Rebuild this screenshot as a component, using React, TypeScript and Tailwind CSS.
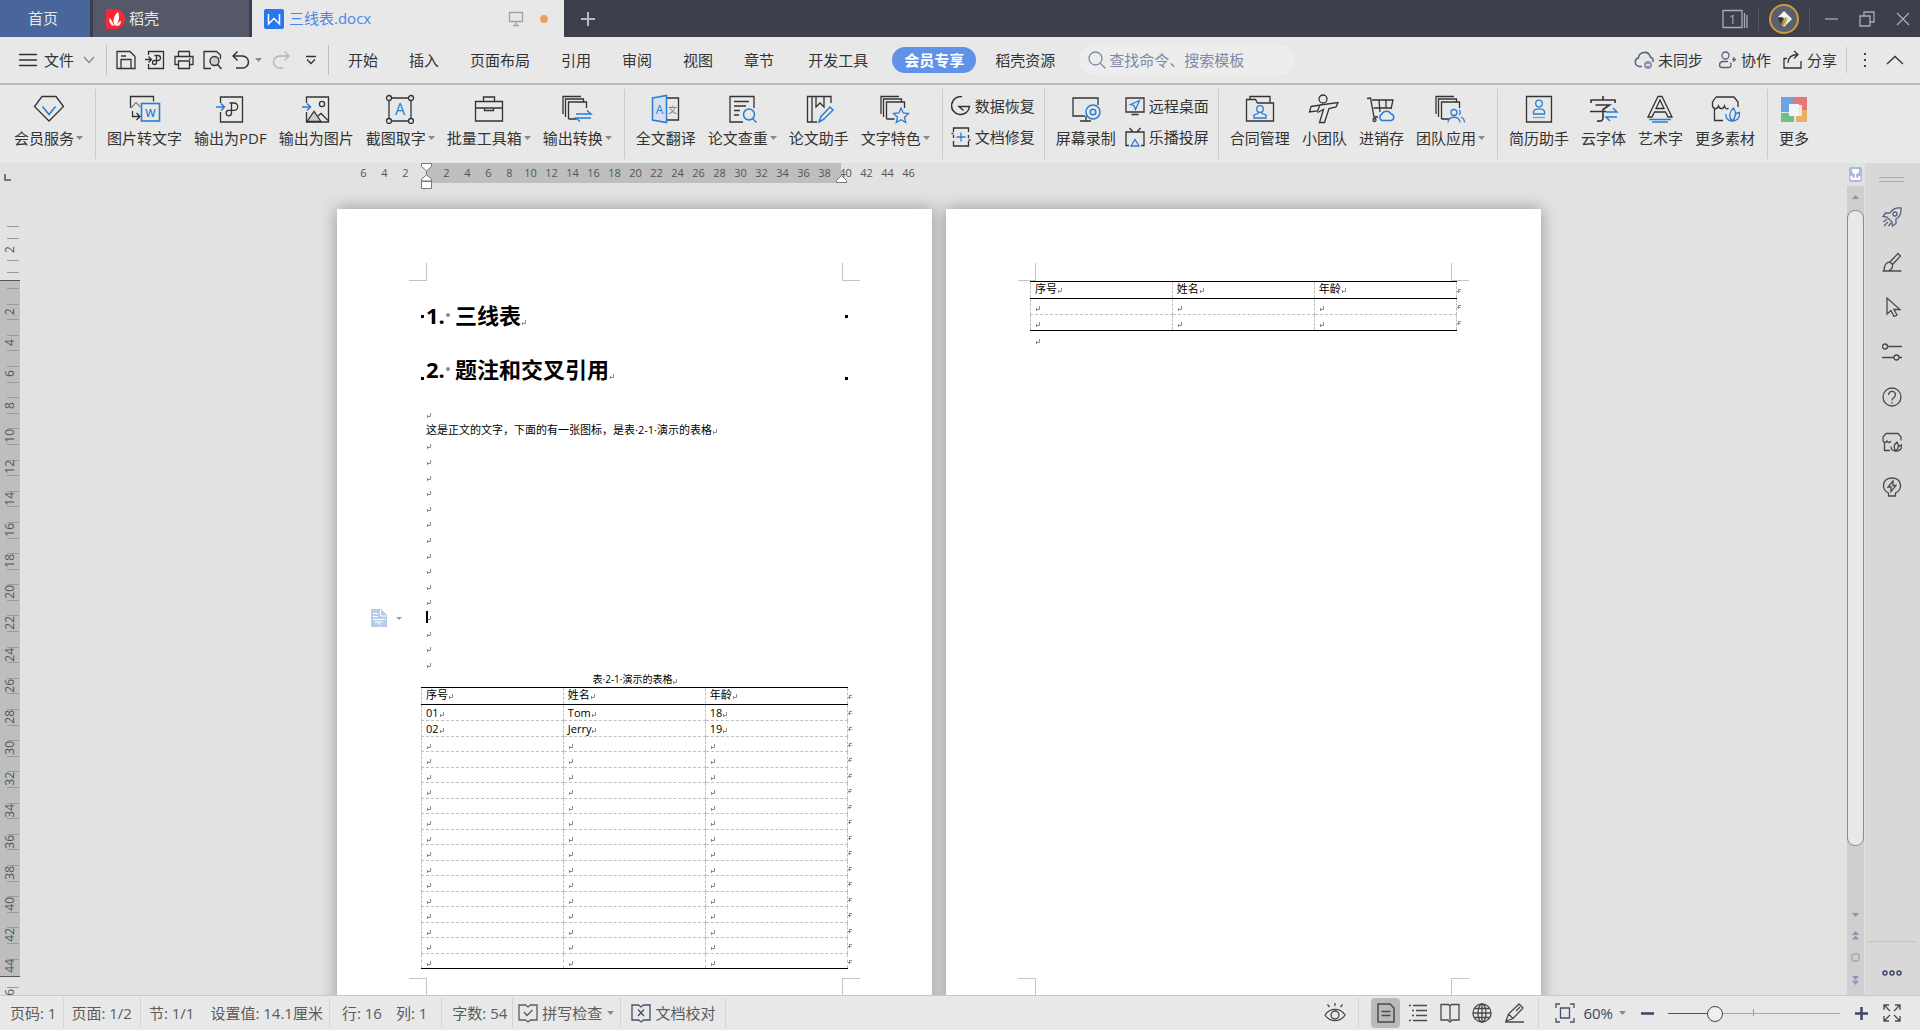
import React, { useState } from "react";

const BLUE = "#2b7cd3";

type SvgProps = { w?: number; h?: number; className?: string; children: React.ReactNode };

const Svg: React.FC<SvgProps> = ({ w = 20, h = 20, className = "", children }) => (
  <svg
    width={w}
    height={h}
    viewBox={`0 0 ${w} ${h}`}
    fill="none"
    stroke="currentColor"
    strokeWidth="1.3"
    className={`shrink-0 ${className}`}
    aria-hidden="true"
  >
    {children}
  </svg>
);

const Caret = ({ className = "" }: { className?: string }) => (
  <svg width="7" height="4" viewBox="0 0 7 4" className={`shrink-0 ${className}`} aria-hidden="true">
    <path d="M0 0h7L3.5 4z" fill="#8a8a8a" />
  </svg>
);

// paragraph end mark
const Mark = ({ className = "mt-1" }: { className?: string }) => (
  <svg width="5" height="5" viewBox="0 0 5 5" className={`shrink-0 ${className}`} aria-hidden="true">
    <path d="M4.5 0v3.5H1.5M1.5 2v3" fill="none" stroke="#8c8c8c" />
  </svg>
);

// table row end mark
const RowMark = () => (
  <svg width="4" height="5" viewBox="0 0 4 5" className="block" aria-hidden="true">
    <path d="M0 3.5h1M1.5 1v4M1.5 1.5h2.5M1.5 3.5h2" fill="none" stroke="#8c8c8c" />
  </svg>
);

const stack = <path d="M2 20V2.5h18M4.5 23V5h18v3M7.5 25V8h18v6M7.5 25h8" />;

const bigIcons: Record<string, React.ReactNode> = {
  vip: (
    <>
      <path d="M9 2.5h14l7.5 10L16 27 1.5 12.5z" />
      <path d="M9.5 12.5l6.5 8 6.5-8" stroke={BLUE} strokeWidth="1.6" />
    </>
  ),
  toText: (
    <>
      <path d="M1.5 14V2.5h23v5" />
      <path d="M2 14l5-5.5 4.5 4.5" stroke="#888" />
      <path d="M3.5 17v5.5h7M7.5 19l3.5 3.5L7.5 26" />
      <rect x="12.5" y="9.5" width="18" height="17.5" stroke={BLUE} strokeWidth="1.6" />
      <text x="21.5" y="22.5" fontSize="11" textAnchor="middle" fill={BLUE} stroke="none" fontWeight="600">W</text>
    </>
  ),
  toPdf: (
    <>
      <path d="M6.5 9V3h22v25h-22V18" />
      <path d="M2 13h8M7 9.5l3.5 3.5L7 16.5" stroke={BLUE} strokeWidth="1.5" />
      <path d="M15.5 9h4.5a3.7 3.7 0 0 1 0 7.4h-5.5a2.7 2.7 0 1 0 3 3V9" />
    </>
  ),
  toPic: (
    <>
      <path d="M6.5 9V3h22v25h-22V18" />
      <path d="M7 27.5l7-10 7 10z" fill="#ccc" />
      <path d="M18 22l3-2.5 7 7" />
      <circle cx="22" cy="10" r="2.6" />
      <path d="M2 13h8M7 9.5l3.5 3.5L7 16.5" stroke={BLUE} strokeWidth="1.5" />
    </>
  ),
  ocr: (
    <>
      <path d="M8 4h16M8 27h16M5 7v17M27 7v17" />
      <circle cx="5" cy="4" r="2.5" />
      <circle cx="27" cy="4" r="2.5" />
      <circle cx="5" cy="27" r="2.5" />
      <circle cx="27" cy="27" r="2.5" />
      <text x="16" y="21" fontSize="16" textAnchor="middle" fill={BLUE} stroke="none">A</text>
    </>
  ),
  toolbox: (
    <>
      <path d="M2.5 7.5h27V27h-27zM2.5 14h27" />
      <path d="M10.5 7V3h11v4" />
      <path d="M11.5 14v2.5h9V14" />
    </>
  ),
  convert: (
    <>
      {stack}
      <path d="M15 20h15l-4-3.5M30 24H15l4 3.5" stroke={BLUE} strokeWidth="1.5" />
    </>
  ),
  translate: (
    <>
      <path d="M17 4h11.5v22H17" />
      <path d="M2.5 4L16.5 1.5v27L2.5 26z" stroke={BLUE} fill="#d6dfee" strokeWidth="1.5" />
      <text x="9.5" y="20" fontSize="12" textAnchor="middle" fill={BLUE} stroke="none">A</text>
      <text x="22.5" y="19" fontSize="9" textAnchor="middle" fill="#777" stroke="none">文</text>
    </>
  ),
  check: (
    <>
      <path d="M28 14V2.5H4v25.5h13M8 7.5h15M8 12h12M8 16.5h6M8 21h5" />
      <circle cx="23" cy="20.5" r="5.5" stroke={BLUE} strokeWidth="1.5" />
      <path d="M26.5 24.5l4 4" stroke={BLUE} strokeWidth="1.5" />
    </>
  ),
  helper: (
    <>
      <path d="M28 9V2.5H4.5v25.5H14M9 3v25M13 3v10l4-4 4 4V3" />
      <path d="M16 28l2-5.5L27 13l3 3-9.5 9.5z" stroke={BLUE} strokeWidth="1.5" />
    </>
  ),
  feature: (
    <>
      {stack}
      <path d="M22 14l2.2 5 5.3.5-4 3.7 1.2 5.3-4.7-2.7-4.7 2.7 1.2-5.3-4-3.7 5.3-.5z" fill="#e8e8e8" stroke={BLUE} />
    </>
  ),
  record: (
    <>
      <path d="M28 11V4H3v18h12M10 27h11M16 22v5" />
      <circle cx="23" cy="18" r="7" stroke={BLUE} fill="#e8e8e8" strokeWidth="1.5" />
      <circle cx="23" cy="18" r="2.8" stroke={BLUE} strokeWidth="1.5" />
    </>
  ),
  contract: (
    <>
      <path d="M2.5 27V5.5h9l2 3.5h16v18z" />
      <path d="M6 5V2.5h20v6" />
      <circle cx="16" cy="15" r="3.3" stroke={BLUE} />
      <path d="M14.5 18l-.5 1.500-4 1.500v3h12v-3l-4-1.500-.5-1.500" stroke={BLUE} />
    </>
  ),
  team: (
    <>
      <circle cx="15" cy="5" r="4" />
      <path d="M3 12.5l9-1.5-2.5 6-8 1zM12 11l18-2.500-2 4.500-7 1.500-4.500 14h-5l4-13-6 3" />
    </>
  ),
  stock: (
    <>
      <path d="M2 4.5l3.500-.5L9 23h4M7 6h21l-2 9M8.500 14h18M14 6l1 12M21 6v8" />
      <circle cx="9.5" cy="26" r="1.5" />
      <path d="M17 26.5a3.500 3.500 0 0 1 0-6.5 5 5 0 0 1 9 0 3.300 3.300 0 0 1 0 6.500z" stroke={BLUE} fill="#e8e8e8" strokeWidth="1.5" />
    </>
  ),
  apps: (
    <>
      {stack}
      <circle cx="20" cy="18.5" r="3" stroke={BLUE} fill="#e8e8e8" />
      <path d="M14 28.5c0-7 12-7 12 0M25 16a3 3 0 0 1 0 5M27 23c2 1 3.500 3 3.500 5.500" stroke={BLUE} />
    </>
  ),
  resume: (
    <>
      <path d="M3.5 2.5h25V28h-25z" />
      <circle cx="16" cy="9.5" r="3.3" stroke={BLUE} />
      <path d="M10.5 20v-2.500c1-3.500 10-3.500 11 0V20z" stroke={BLUE} />
      <path d="M10 23.5h12" stroke="#999" />
    </>
  ),
  cloudFont: (
    <>
      <path d="M4 9V6h24v3M16 2v4M8.500 11h14L16 15.500V24c0 3-2 3.500-6 3M3 17.500h16" strokeWidth="1.6" />
      <path d="M19 18h11l-4-4M30 23H19l4 4" stroke={BLUE} strokeWidth="1.5" />
    </>
  ),
  art: (
    <>
      <path d="M4 23L14 2.500h4L28 23h-4l-2.500-5h-11L8 23zM12 14.500h8L16 6z" />
      <path d="M5 25.5h22M8 28h16" stroke={BLUE} strokeWidth="1.5" />
    </>
  ),
  store: (
    <>
      <path d="M7 3h18l4 5v5M7 3L3.500 8v4c1 3.500 5 3.500 6 0 1 3.500 5 3.500 6 0 1 3.500 3 3.500 4 2M5.500 14v12.500H14" />
      <path d="M23 27c-4-5-2-10 1.500-13 2.500 4 3 9-1.500 13zM23 27c-5 0-6.500-4-6-7M23 27c6 0 8-4 7.500-8.500-2 0-4 1.500-5 3" stroke={BLUE} />
    </>
  ),
  more: (
    <g stroke="none">
      <path d="M3 3h12v7h-4v8H3z" fill="#6ca3e8" />
      <path d="M15 3h14v13h-5v-5h-9z" fill="#e87878" />
      <path d="M3 19h8v3h5v6H3z" fill="#6cc283" />
      <path d="M29 16v12H18v-6h6v-6z" fill="#e8b063" />
      <path d="M11 10h10v12H11z" fill="#f4f4f4" />
    </g>
  ),
};

type BigProps = { icon: string; label: string; menu?: boolean };

const Big: React.FC<BigProps> = ({ icon, label, menu }) => (
  <button className="flex flex-col items-center gap-1 px-[6px] pt-[9px]">
    <Svg w={32} h={30} className="-mx-px">{bigIcons[icon]}</Svg>
    <span className="flex items-center whitespace-nowrap leading-5">
      {label}
      {menu && <Caret className="ml-[2px]" />}
    </span>
  </button>
);

type SmallProps = { label: string; children: React.ReactNode };

const Small: React.FC<SmallProps> = ({ label, children }) => (
  <button className="flex items-center gap-1 whitespace-nowrap leading-5">
    <Svg>{children}</Svg>
    {label}
  </button>
);

const Sep = () => <span className="my-1 ml-[6px] mr-[5px] w-px shrink-0 bg-[#cbcbcb]" />;

const TitleBar = () => (
  <header className="flex h-[37px] shrink-0 bg-[#3d404c] text-[#e8e8e8]">
    <button className="w-[90px] bg-[#48669b] pr-1">首页</button>
    <button className="ml-[3px] flex w-[156px] items-center gap-1 bg-[#545869] pl-[13px]">
      <svg width="19" height="20" viewBox="0 0 19 20" aria-hidden="true">
        <path d="M1 0h9a9 10 0 0 1 0 20H1a1 1 0 0 1-1-1V1a1 1 0 0 1 1-1z" fill="#fb2636" />
        <path d="M9 17C6 12 8 6 12 3c2 5 1 10-3 14zM8 17c-4-1-5-4-4.500-8C6 11 7 14 8 17zM10 17c1-3 3-4 5-5 0 3-2 5-5 5z" fill="#fff" />
      </svg>
      稻壳
    </button>
    <div className="ml-[3px] flex w-[312px] items-center bg-[#e8e8e8] pl-3 pr-4 text-[#4a86e8]">
      <svg width="20" height="20" viewBox="0 0 20 20" aria-hidden="true">
        <rect width="20" height="20" rx="2" fill="#2878ec" />
        <path d="M4.500 5v10l5.500-5.500 5.500 5.500V5" fill="none" stroke="#fff" strokeWidth="1.5" />
      </svg>
      <span className="ml-[5px] flex-1">三线表.docx</span>
      <Svg w={16} h={16} className="mr-4 text-[#a0a0a0]">
        <path d="M1.500 1.500h13v9h-13zM8 10.500v4M5 14.500h6" />
      </Svg>
      <span className="size-2 rounded-full bg-[#e8a05c]" />
    </div>
    <button className="ml-4 text-[#b8b9be]" aria-label="新建">
      <Svg w={16} h={16}><path d="M8 1v14M1 8h14" strokeWidth="2" /></Svg>
    </button>
    <div className="ml-auto flex items-center pr-[10px] text-[#a9abb3]">
      <Svg w={26} h={20}>
        <path d="M1 1.500h19v17H1zM22.500 4v15M25 6v13" />
        <text x="10.5" y="15" fontSize="13" textAnchor="middle" fill="currentColor" stroke="none">1</text>
      </Svg>
      <span className="mx-[10px] h-6 w-px bg-[#53555f]" />
      <svg width="30" height="30" viewBox="0 0 30 30" aria-hidden="true">
        <circle cx="15" cy="15" r="14" fill="#59606f" stroke="#d09a36" strokeWidth="2" />
        <path d="M15 7l8 8-8 8-2-2 1-8H9z" fill="#f2f2f2" />
        <path d="M9 14h6l-3 6z" fill="#2d333e" />
        <path d="M15 14l-2.500 7" stroke="#d94a3c" strokeWidth="1.5" />
        <path d="M17 13.500l-3 8" stroke="#69b54b" strokeWidth="1.5" />
        <path d="M18.500 14l-3 7" stroke="#e0a83a" strokeWidth="1.2" />
      </svg>
      <span className="ml-[10px] mr-[15px] h-6 w-px bg-[#53555f]" />
      <button aria-label="最小化"><Svg w={13} h={16}><path d="M0 8h13" /></Svg></button>
      <button className="ml-[21px]" aria-label="还原">
        <Svg w={16} h={16}><path d="M1 5h10v10H1zM5 5V1h10v10h-4" /></Svg>
      </button>
      <button className="ml-[21px]" aria-label="关闭">
        <Svg w={14} h={14}><path d="M1 1l12 12M13 1L1 13" /></Svg>
      </button>
    </div>
  </header>
);

const tabs = ["开始", "插入", "页面布局", "引用", "审阅", "视图", "章节", "开发工具"];

const MenuBar = () => (
  <nav className="flex h-12 shrink-0 items-center border-b-2 border-[#c2c2c2] pl-[19px] pr-4">
    <button className="flex items-center gap-[7px]">
      <Svg w={18} h={14}><path d="M0 1.500h18M0 7h18M0 12.500h18" /></Svg>
      文件
      <Svg w={12} h={8} className="ml-[2px] text-[#888]"><path d="M1 1l5 5.500L11 1" /></Svg>
    </button>
    <span className="ml-[11px] h-[30px] w-px bg-[#c0c0c0]" />
    <div className="ml-[9px] flex items-center">
      <button aria-label="保存">
        <Svg><path d="M1 1.500h13l5 5v12H1zM5 18V9.500h10V18M5 6h5" /></Svg>
      </button>
      <button className="ml-[9px]" aria-label="输出为PDF">
        <Svg>
          <path d="M3.500 5V1.500h15v17h-15V14M0 9.500h6M3.500 6.500l3 3-3 3" />
          <path d="M9.500 5.500H13a2.500 2.500 0 0 1 0 5H9.500a2 2 0 1 0 2 2v-7" />
        </Svg>
      </button>
      <button className="ml-[9px]" aria-label="打印">
        <Svg><path d="M4.500 6V1.500h11V6M4.500 14.500H1V6.500h18v8h-3.500M4.500 11h11v7.500h-11zM15 9h1.500" /></Svg>
      </button>
      <button className="ml-[9px]" aria-label="打印预览">
        <Svg>
          <path d="M8 18.500H1v-17h12.500l4 3.500v4" />
          <circle cx="11.5" cy="11" r="4.5" fill="#ccc" />
          <path d="M14.500 14.500l4 4.500" strokeWidth="1.6" />
        </Svg>
      </button>
      <button className="ml-[9px] flex items-center gap-[5px]" aria-label="撤销">
        <Svg w={18} h={20}><path d="M5.500 1.500L1 6l4.500 4.500M1 6h9.500a6 6 0 0 1 0 12H4" strokeWidth="1.5" /></Svg>
        <Caret />
      </button>
      <button className="ml-[10px] text-[#b4b4b4]" aria-label="恢复">
        <Svg w={18} h={20}><path d="M12.500 1.500L17 6l-4.500 4.500M17 6H7.500a6 6 0 0 0 0 12H11" /></Svg>
      </button>
      <button className="ml-4" aria-label="自定义快速访问工具栏">
        <Svg w={10} h={10}><path d="M0 1.500h10M1 4.500l4 4 4-4" /></Svg>
      </button>
    </div>
    <span className="ml-3 h-[30px] w-px bg-[#c0c0c0]" />
    <div className="ml-[19px] flex items-center gap-[31px] whitespace-nowrap">
      {tabs.map((t) => <button key={t} className="last:ml-[3px]">{t}</button>)}
    </div>
    <button className="ml-6 h-[26px] whitespace-nowrap rounded-full bg-[#5f92e8] px-3 font-bold text-white">会员专享</button>
    <button className="ml-[19px] whitespace-nowrap">稻壳资源</button>
    <label className="ml-6 flex h-[30px] w-[216px] items-center gap-[3px] rounded-full bg-[#ededed] pl-[9px] text-[#7d89a5]">
      <Svg w={18} h={18}>
        <circle cx="7.5" cy="7.5" r="6.5" />
        <path d="M12.500 12.500l5 5" />
      </Svg>
      <input className="w-[170px] bg-transparent outline-none placeholder:text-[#7d89a5]" placeholder="查找命令、搜索模板" />
    </label>
    <div className="ml-auto flex items-center whitespace-nowrap">
      <button className="flex items-center gap-1">
        <Svg className="text-[#56627f]">
          <path d="M8 16.500H5.500a4.500 4.500 0 0 1-1-8.800 6 6 0 0 1 11.800-.7c2 .7 3.200 2.500 2.700 5" strokeWidth="1.5" />
          <circle cx="14" cy="15" r="4" fill="#8a96b2" stroke="none" />
          <path d="M12 15h4" stroke="#fff" />
        </Svg>
        未同步
      </button>
      <button className="ml-[15px] flex items-center gap-[5px]">
        <Svg w={18} h={20} className="text-[#56627f]">
          <circle cx="7.5" cy="5.5" r="3.5" />
          <path d="M10 11.500H4.500c-4 1-4 6 0 6h6c3 0 3-3 2-5M14 9.500h4M16 7v5" />
        </Svg>
        协作
      </button>
      <button className="ml-3 flex items-center gap-1">
        <Svg><path d="M4 8.500H1v9.500h17v-7M5 13c0-5 3-8 9-8.500M11 1l4 3.500L11 8.500" /></Svg>
        分享
      </button>
      <span className="ml-[9px] h-[26px] w-px bg-[#c8c8c8]" />
      <button className="ml-[17px] flex flex-col gap-1" aria-label="更多">
        <i className="size-[2px] bg-[#444]" />
        <i className="size-[2px] bg-[#444]" />
        <i className="size-[2px] bg-[#444]" />
      </button>
      <button className="ml-5" aria-label="折叠功能区">
        <Svg w={18} h={10}><path d="M1 9l8-7.500L17 9" /></Svg>
      </button>
    </div>
  </nav>
);

const Ribbon = () => (
  <section className="flex h-[78px] shrink-0 pl-2 shadow-[0_1px_4px_rgba(0,0,0,0.2)]">
    <Big icon="vip" label="会员服务" menu />
    <Sep />
    <Big icon="toText" label="图片转文字" />
    <Big icon="toPdf" label="输出为PDF" />
    <Big icon="toPic" label="输出为图片" />
    <Big icon="ocr" label="截图取字" menu />
    <Big icon="toolbox" label="批量工具箱" menu />
    <Big icon="convert" label="输出转换" menu />
    <Sep />
    <Big icon="translate" label="全文翻译" />
    <Big icon="check" label="论文查重" menu />
    <Big icon="helper" label="论文助手" />
    <Big icon="feature" label="文字特色" menu />
    <Sep />
    <div className="flex flex-col gap-[11px] px-[3px] pt-[11px]">
      <Small label="数据恢复">
        <path d="M11 .7a9 9 0 1 0 7.500 9.800H8l4.500 4" strokeWidth="1.5" />
      </Small>
      <Small label="文档修复">
        <path d="M2.500 5V1h15v4M2.500 8v3M17.500 8v3M2.500 14v5h15v-5M.500 6.500h2M17.500 13h2" />
        <path d="M10 5.500v9M5.500 10h9" stroke={BLUE} />
      </Small>
    </div>
    <Sep />
    <Big icon="record" label="屏幕录制" />
    <div className="flex flex-col gap-[11px] px-[3px] pt-[11px]">
      <Small label="远程桌面">
        <path d="M1 2h18v14H1zM6.500 18.500h7" />
        <path d="M14.500 4.500l-4 9-1.500-4-3.500-1z" stroke={BLUE} />
      </Small>
      <Small label="乐播投屏">
        <path d="M4 18.500H1V5h18v13.500h-3M4.500 1L8 5M15.500 1L12 5" />
        <path d="M10 12.500l4 6.500H6z" stroke={BLUE} />
      </Small>
    </div>
    <Sep />
    <Big icon="contract" label="合同管理" />
    <Big icon="team" label="小团队" />
    <Big icon="stock" label="进销存" />
    <Big icon="apps" label="团队应用" menu />
    <Sep />
    <Big icon="resume" label="简历助手" />
    <Big icon="cloudFont" label="云字体" />
    <Big icon="art" label="艺术字" />
    <Big icon="store" label="更多素材" />
    <Sep />
    <Big icon="more" label="更多" />
  </section>
);

const evens = (count: number) => Array.from({ length: count }, (_, i) => (i + 1) * 2);

const Tick = () => <i className="ml-[7px] h-px w-3 bg-[#9a9a9a]" />;

const VLabel = ({ n }: { n: number }) => (
  <span className="flex h-0 w-5 items-center justify-center">
    <span className="rotate-180 leading-5 [writing-mode:vertical-rl]">{n}</span>
  </span>
);

const VerticalRuler = () => (
  <div className="flex w-5 shrink-0 flex-col overflow-hidden text-xs text-[#555]">
    <div className="h-[46px] shrink-0 pl-1 pt-[11px]">
      <i className="block size-[7px] border-b-2 border-l-2 border-[#777]" />
    </div>
    <div className="flex h-[72px] shrink-0 flex-col border-b border-[#555] pt-[17px]">
      <div className="flex h-[47px] flex-col justify-between">
        <Tick />
        <Tick />
        <VLabel n={2} />
        <Tick />
        <Tick />
      </div>
    </div>
    <div className="h-[696px] shrink-0 border-b border-[#555] bg-[#bebebe] pt-[7px]">
      <div className="flex h-[686px] flex-col">
        {evens(22).map((n) => (
          <div key={n} className="flex flex-1 flex-col">
            <div className="flex flex-1 flex-col"><Tick /></div>
            <div className="relative flex flex-1 flex-col justify-center">
              <i className="absolute left-[7px] top-0 h-px w-3 bg-[#9a9a9a]" />
              <VLabel n={n} />
            </div>
          </div>
        ))}
      </div>
    </div>
    <div className="flex shrink-0 flex-col gap-2 pt-[10px]">
      <Tick />
      <VLabel n={46} />
    </div>
  </div>
);

const HCell = ({ n }: { n: number }) => <span className="w-[21px] shrink-0 text-center">{n}</span>;

const HorizontalRuler = () => (
  <div className="flex h-[46px] items-start pl-4 text-[11px] leading-5 text-[#555]">
    {[6, 4, 2].map((n) => <HCell key={n} n={n} />)}
    <div className="relative ml-[10px] flex h-5 w-[415px] bg-[#bebebe] pl-[10px]">
      {evens(19).map((n) => <HCell key={n} n={n} />)}
      <svg width="11" height="26" viewBox="0 0 11 26" fill="#fff" stroke="#777" className="absolute -left-[5px] top-0">
        <path d="M.500.500h10v3l-5 4.500-5-4.500zM5.500 8v4M.500 18v-2l5-4 5 4v2zM.500 18.500h10v7H.500z" />
      </svg>
      <svg width="11" height="8" viewBox="0 0 11 8" fill="#fff" stroke="#777" className="absolute -right-[6px] top-3">
        <path d="M.500 7.500v-2l5-5 5 5v2z" />
      </svg>
    </div>
    <div className="-ml-[6px] flex">
      {[40, 42, 44, 46].map((n) => <HCell key={n} n={n} />)}
    </div>
  </div>
);

const Page = ({ children }: { children: React.ReactNode }) => (
  <article className="w-[595px] shrink-0 bg-white pb-20 shadow-[0_0_16px_rgba(0,0,0,0.35)]">
    <div className="flex h-[72px] items-end justify-between px-[72px]">
      <i className="size-[18px] border-b border-r border-[#c4c4c4]" />
      <i className="size-[18px] border-b border-l border-[#c4c4c4]" />
    </div>
    <div className="h-[697px] pl-[84px] pr-[77px]">{children}</div>
    <div className="flex justify-between px-[72px]">
      <i className="size-[18px] border-r border-t border-[#c4c4c4]" />
      <i className="size-[18px] border-l border-t border-[#c4c4c4]" />
    </div>
  </article>
);

const cellBorder = "border-x border-dashed border-x-[#c0c0c0] p-0 pl-1 text-left font-normal leading-none";

const CellText = ({ text }: { text: string }) => (
  <span className="flex h-[13px] items-center">
    {text}
    <Mark />
  </span>
);

const DocTable = ({ rows }: { rows: string[][] }) => (
  <table className="w-full table-fixed border-collapse text-[11px] text-black">
    <colgroup>
      <col />
      <col />
      <col />
      <col className="w-2" />
    </colgroup>
    <thead>
      <tr className="h-[17px]">
        {["序号", "姓名", "年龄"].map((t) => (
          <th key={t} className={`${cellBorder} border-y border-y-black align-top [border-bottom-style:solid] [border-top-style:solid]`}>
            <CellText text={t} />
          </th>
        ))}
        <td className="p-0"><RowMark /></td>
      </tr>
    </thead>
    <tbody>
      {rows.map((r, i) => (
        <tr key={i} className={i > 1 && i % 2 === 0 ? "h-[15px]" : "h-4"}>
          {r.map((t, j) => (
            <td
              key={j}
              className={
                i === rows.length - 1
                  ? `${cellBorder} border-b border-b-black [border-bottom-style:solid]`
                  : `${cellBorder} border-b border-b-[#c0c0c0]`
              }
            >
              <CellText text={t} />
            </td>
          ))}
          <td className="p-0"><RowMark /></td>
        </tr>
      ))}
    </tbody>
  </table>
);

const blank = (count: number) => Array.from({ length: count }, () => ["", "", ""]);

const Heading = ({ no, text, low }: { no: string; text: string; low?: boolean }) => (
  <div className="mb-[10px] flex h-11 items-center pr-[7px] text-[22px]">
    <i className={low ? "mb-3 size-[3px] self-end bg-black" : "size-[3px] bg-black"} />
    <h1 className="ml-[2px] flex items-center pb-[2px] font-bold">
      <span className="w-5">{no}</span>
      <span className="mr-[5px] size-1 rounded-full bg-[#8c8c8c]" />
      {text}
    </h1>
    <Mark className="mt-3" />
    <i className={low ? "mb-3 ml-auto size-[3px] self-end bg-black" : "ml-auto size-[3px] bg-black"} />
  </div>
);

const Document = () => (
  <div className="flex items-start gap-[14px]">
    <Page>
      <div className="pb-1 pt-[13px] text-black">
        <Heading no="1." text="三线表" />
        <Heading no="2." text="题注和交叉引用" low />
      </div>
      <div className="flex h-[265px] flex-col pl-[5px] text-[11px] leading-none text-black">
        {Array.from({ length: 17 }, (_, i) => (
          <p key={i} className="relative flex flex-1 items-center whitespace-nowrap">
            {i === 1 && "这是正文的文字，下面的有一张图标，是表·2-1·演示的表格"}
            {i === 13 && (
              <>
                <svg width="34" height="18" viewBox="0 0 34 18" className="absolute -left-[55px] top-0" aria-hidden="true">
                  <path d="M0 0h10l6 6v12H0z" fill="#b9cce9" />
                  <path d="M9.500 1v6H15M2 4.500h5M2 7.500h5M2 10.500h12M4 13h8M8 13v3" fill="none" stroke="#fff" />
                  <path d="M25 8h6l-3 3z" fill="#999" />
                </svg>
                <i className="absolute left-0 top-[2px] h-3 w-[2px] bg-black" />
              </>
            )}
            <Mark />
          </p>
        ))}
      </div>
      <p className="flex h-4 items-center justify-center pr-[6px] text-[10px] leading-none text-black">
        表·2-1·演示的表格
        <Mark />
      </p>
      <DocTable rows={[["01", "Tom", "18"], ["02", "Jerry", "19"], ...blank(15)]} />
    </Page>
    <Page>
      <DocTable rows={blank(2)} />
      <p className="flex h-4 items-center pl-[5px]"><Mark /></p>
    </Page>
  </div>
);

const ScrollBar = () => (
  <div className="flex w-[17px] shrink-0 flex-col items-center">
    <svg width="13" height="15" viewBox="0 0 13 15" className="my-1 shrink-0" aria-hidden="true">
      <rect width="13" height="15" rx="2" fill="#adbad6" />
      <path d="M3 2h7v3L8 7H5L3 5zM6 7h1v3H6zM1.500 9h2v2H5v-1h3v1h1.500V9h2v4h-10z" fill="#fff" />
    </svg>
    <div className="flex w-full flex-1 flex-col items-center bg-[#cfcfcf]">
      <svg width="7" height="4" viewBox="0 0 7 4" className="mb-[11px] mt-[9px]"><path d="M0 4h7L3.500 0z" fill="#8996b4" /></svg>
      <div className="h-[636px] w-full rounded-lg border border-[#8c8c8c] bg-[#e8e8e8]" />
      <svg width="9" height="72" viewBox="0 0 9 72" className="mb-[10px] mt-auto" fill="#8996b4" aria-hidden="true">
        <path d="M1 0h7L4.500 4zM1 22h7L4.500 18zM1 26.500h7l-3.500-4z" />
        <rect x="1" y="41" width="7" height="7" rx="1" fill="none" stroke="#8996b4" />
        <path d="M1 63h7l-3.500 4zM1 67.500h7L4.500 72z" />
      </svg>
    </div>
  </div>
);

const sideTools: { name: string; icon: React.ReactNode }[] = [
  {
    name: "快捷",
    icon: (
      <g stroke="#56627f">
        <path d="M19 1c-6-.5-9 1.500-11 5H3.500L1 9.500l4 .5 5 5 .5 4 3.500-2.500V12c4-2 5.500-5 5-11z" />
        <circle cx="13" cy="7" r="2" />
        <path d="M5 12l-3.500 3M6 15l-4 4M9 16l-2.500 3" />
      </g>
    ),
  },
  { name: "样式", icon: <path d="M.5 19h19M8 10l8-8.500 2.500 2.500-8 8.500M8 10c-4 0-6 3-6 9h4c3-1 5-3 4.500-6.500z" /> },
  { name: "选择", icon: <path d="M5 1v16l4-3.500 3 6 3-1.500-3-5.500h6z" /> },
  {
    name: "属性",
    icon: (
      <>
        <circle cx="3" cy="4.500" r="2.5" />
        <circle cx="14.500" cy="15.500" r="2.5" />
        <path d="M5.500 4.500H20M0 15.500h12M17 15.500h3" />
      </>
    ),
  },
  {
    name: "帮助",
    icon: (
      <>
        <circle cx="10" cy="10" r="9" />
        <path d="M6.500 8c0-5 7-4.500 7 0 0 2.500-3.500 2.500-3.500 5.500M10 15v1.500" />
      </>
    ),
  },
  {
    name: "素材",
    icon: (
      <>
        <path d="M4 1.500h12l3 3.500v3.500M4 1.500L1 5v4c1 2 3 2 4 0 1 2 3 2 4 0M2.500 11v7.500H8" />
        <path d="M14 19c-3-3-2-7 1-9 2 3 2 6-1 9zM14 19c-4 0-5-2-5-4.500M14 19c4 0 6-2 5.500-6-2 .5-3 1.500-3.500 2.500" />
      </>
    ),
  },
  {
    name: "灵感",
    icon: (
      <>
        <path d="M6.500 19v-3C-1.500 12 .5 1 10 1s11.500 11 3.500 15v3z" />
        <path d="M11 4l-5 6h3v4.500l5-6h-3z" />
      </>
    ),
  },
];

const SidePanel = () => (
  <aside className="ml-px flex w-[55px] shrink-0 flex-col items-center bg-[#d8d8d8] pr-[2px] text-[#4a4a4a]">
    <i className="mt-[14px] h-[5px] w-[25px] border-y border-[#aaa]" />
    <div className="mt-[25px] flex flex-col gap-[25px]">
      {sideTools.map((t) => (
        <button key={t.name} aria-label={t.name}><Svg className="block">{t.icon}</Svg></button>
      ))}
    </div>
    <i className="mt-auto h-px w-[49px] bg-[#c4c4c4]" />
    <button className="flex h-[53px] items-center pt-2 text-[#3c4662]" aria-label="更多工具">
      <Svg w={20} h={6}>
        <g strokeWidth="1.5">
          <circle cx="3" cy="3" r="2" />
          <circle cx="10" cy="3" r="2" />
          <circle cx="17" cy="3" r="2" />
        </g>
      </Svg>
    </button>
  </aside>
);

const StatusSep = ({ className = "" }: { className?: string }) => <i className={`h-[30px] w-px bg-[#d4d4d4] ${className}`} />;

const StatusBar = () => {
  const [zoom, setZoom] = useState(25);

  return (
    <footer className="flex h-[35px] shrink-0 items-center whitespace-nowrap border-t border-[#c8c8c8] pl-[10px] pr-[19px] text-[#5c5c5c]">
      <span>页码: 1</span>
      <StatusSep className="mx-[7px]" />
      <span>页面: 1/2</span>
      <StatusSep className="mx-2" />
      <span>节: 1/1</span>
      <span className="ml-4">设置值: 14.1厘米</span>
      <StatusSep className="ml-[6px] mr-3" />
      <span>行: 16</span>
      <span className="ml-[14px]">列: 1</span>
      <StatusSep className="ml-[14px] mr-[10px]" />
      <span>字数: 54</span>
      <StatusSep className="mx-[5px]" />
      <button className="flex items-center gap-1">
        <Svg><path d="M1 2h6.500l2.500 2 2.500-2H19v15h-6.500L10 19l-2.500-2H1zM6 9l3 3.500L14.500 7" /></Svg>
        拼写检查
        <Caret className="ml-px" />
      </button>
      <StatusSep className="ml-[6px] mr-[10px]" />
      <button className="flex items-center gap-1">
        <Svg className="text-[#46506c]"><path d="M1 2h6.500l2.500 2 2.500-2H19v15h-6.500L10 19l-2.500-2H1zM7 6.500l6 6.500M13 6.500L7 13" /></Svg>
        文档校对
      </button>
      <StatusSep className="ml-[10px]" />

      <div className="ml-auto flex items-center text-[#4a4a4a]">
        <button aria-label="护眼模式">
          <Svg w={22}>
            <path d="M1 12c5-7.500 15-7.500 20 0-5 7.500-15 7.500-20 0zM11 0v3M3.500 1.500L5.500 4M18.500 1.500L16.500 4" />
            <circle cx="11" cy="12" r="4" />
          </Svg>
        </button>
        <StatusSep className="mx-[12px]" />
        <button className="flex h-[30px] w-[29px] items-center justify-center rounded bg-[#bababa]" aria-label="页面视图">
          <Svg w={18} h={20}><path d="M1 1h12l4 4v14H1zM4.500 8.500h9M4.500 12.500h9" strokeWidth="1.5" /></Svg>
        </button>
        <button className="ml-[9px]" aria-label="大纲">
          <Svg w={19}><path d="M0 2.500h2M4 2.500h14M3 7.500h2M7 7.500h11M3 12.500h2M7 12.500h11M0 17.500h2M4 17.500h14" strokeWidth="1.5" /></Svg>
        </button>
        <button className="ml-3" aria-label="阅读版式">
          <Svg><path d="M1 1.500h7.500L10 3l1.500-1.500H19V17h-7L10 19l-2-2H1zM10 3v14" /></Svg>
        </button>
        <button className="ml-3" aria-label="Web版式">
          <Svg>
            <circle cx="10" cy="10" r="9" />
            <ellipse cx="10" cy="10" rx="4" ry="9" />
            <path d="M1 10h18M2.500 5.500h15M2.500 14.500h15M10 1v18" />
          </Svg>
        </button>
        <button className="ml-3" aria-label="写作模式">
          <Svg w={21}><path d="M1 19h19M2 18l2.500-7L15 1l4 4L9 15.500zM4.500 11l4.500 4.500M12 8l4-4" /></Svg>
        </button>
        <StatusSep className="ml-[13px] mr-4" />
        <button className="text-[#46506c]" aria-label="最佳显示比例">
          <Svg><path d="M1 5V1h4M15 1h4v4M19 15v4h-4M5 19H1v-4M5.500 5h9v10h-9z" /></Svg>
        </button>
        <button className="ml-2 flex items-center gap-[6px] text-[#3c4662]">
          60%
          <Caret />
        </button>
        <button className="ml-[15px] text-[#3c4662]" aria-label="缩小">
          <Svg w={13} h={13}><path d="M0 6.500h13" strokeWidth="2.5" /></Svg>
        </button>
        <div className="relative ml-[14px] flex h-5 w-[172px] items-center">
          <i className="absolute left-[85px] top-[6px] h-[7px] w-px bg-[#999]" />
          <input
            type="range"
            aria-label="显示比例"
            value={zoom}
            onChange={(e) => setZoom(Number(e.target.value))}
            className="relative h-4 w-full appearance-none bg-transparent [&::-webkit-slider-runnable-track]:h-px [&::-webkit-slider-runnable-track]:bg-[linear-gradient(to_right,#555_27%,#aaa_27%)] [&::-webkit-slider-thumb]:-mt-[7px] [&::-webkit-slider-thumb]:size-4 [&::-webkit-slider-thumb]:appearance-none [&::-webkit-slider-thumb]:rounded-full [&::-webkit-slider-thumb]:border [&::-webkit-slider-thumb]:border-[#444] [&::-webkit-slider-thumb]:bg-[#f0f0f0]"
          />
        </div>
        <button className="ml-[15px] text-[#3c4662]" aria-label="放大">
          <Svg w={13} h={13}><path d="M0 6.500h13M6.500 0v13" strokeWidth="2.5" /></Svg>
        </button>
        <button className="ml-[15px]" aria-label="全屏">
          <Svg w={18} h={18}><path d="M1 6V1h5M1 1l6 6M12 1h5v5M17 1l-6 6M17 12v5h-5M17 17l-6-6M6 17H1v-5M1 17l6-6" /></Svg>
        </button>
      </div>
    </footer>
  );
};

const App: React.FC = () => (
  <div className="flex h-screen flex-col overflow-hidden bg-[#e8e8e8] font-['Open_Sans','Noto_Sans_CJK_SC',sans-serif] text-[15px] text-[#333]">
    <TitleBar />
    <MenuBar />
    <Ribbon />
    <main className="flex min-h-0 flex-1 bg-[#e2e2e2]">
      <VerticalRuler />
      <div className="flex min-w-0 flex-1 justify-center overflow-hidden pl-[11px]">
        <div className="shrink-0">
          <HorizontalRuler />
          <Document />
        </div>
      </div>
      <ScrollBar />
      <SidePanel />
    </main>
    <StatusBar />
  </div>
);

export default App;
